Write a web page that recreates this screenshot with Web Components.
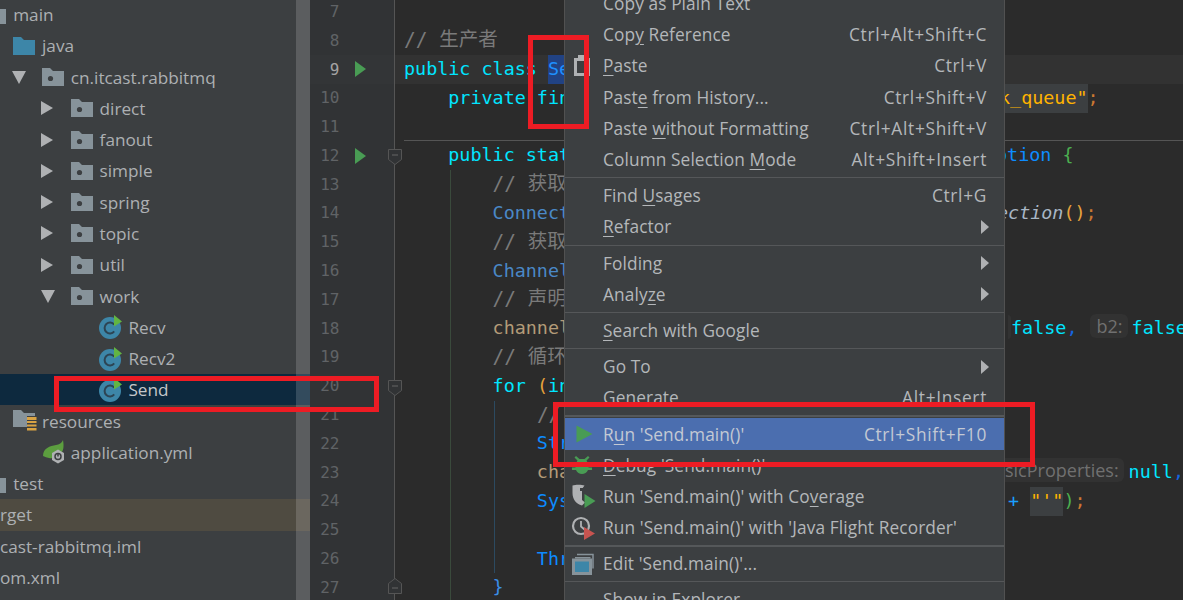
<!DOCTYPE html>
<html>
<head>
<meta charset="utf-8">
<title>IDE</title>
<style>
  html, body { margin: 0; height: 100%; background: #2b2b2b; overflow: hidden; }
  ide-app { font-family: "Open Sans", "Liberation Sans", sans-serif; }
</style>
</head>
<body>
<ide-app>
  <project-tree slot="tree">
    <tree-row level="-1" icon="plain">main</tree-row>
    <tree-row level="0" icon="source">java</tree-row>
    <tree-row level="1" icon="package" arrow="down">cn.itcast.rabbitmq</tree-row>
    <tree-row level="2" icon="package" arrow="right">direct</tree-row>
    <tree-row level="2" icon="package" arrow="right">fanout</tree-row>
    <tree-row level="2" icon="package" arrow="right">simple</tree-row>
    <tree-row level="2" icon="package" arrow="right">spring</tree-row>
    <tree-row level="2" icon="package" arrow="right">topic</tree-row>
    <tree-row level="2" icon="package" arrow="right">util</tree-row>
    <tree-row level="2" icon="package" arrow="down">work</tree-row>
    <tree-row level="3" icon="class">Recv</tree-row>
    <tree-row level="3" icon="class">Recv2</tree-row>
    <tree-row level="3" icon="class" selected>Send</tree-row>
    <tree-row level="0" icon="resources">resources</tree-row>
    <tree-row level="1" icon="spring">application.yml</tree-row>
    <tree-row level="-1" icon="plain">test</tree-row>
    <tree-row flat excluded>rget</tree-row>
    <tree-row flat>cast-rabbitmq.iml</tree-row>
    <tree-row flat>om.xml</tree-row>
  </project-tree>

  <code-editor slot="editor">
    <code-line n="7"></code-line>
    <code-line n="8"><span class="c">// 生产者</span></code-line>
    <code-line n="9" run active><span class="k">public class </span><span class="sel">Se</span></code-line>
    <code-line n="10" at="595"><span class="k">    private fin</span><span slot="right" class="s hl">k_queue"</span><span slot="right" class="o">;</span></code-line>
    <code-line n="11" rule></code-line>
    <code-line n="12" run fold="down" at="592"><span class="k">    public stat</span><span slot="right" class="b">ption </span><span slot="right" class="g">{</span></code-line>
    <code-line n="13" guides="1"><span>        </span><span class="c">// 获取</span></code-line>
    <code-line n="14" guides="1" at="593"><span class="t">        Connect</span><span slot="right" class="m">ection</span><span slot="right" class="y">()</span><span slot="right" class="o">;</span></code-line>
    <code-line n="15" guides="1"><span>        </span><span class="c">// 获取</span></code-line>
    <code-line n="16" guides="1"><span class="t">        Channel</span></code-line>
    <code-line n="17" guides="1"><span>        </span><span class="c">// 声明</span></code-line>
    <code-line n="18" guides="1" at="604"><span class="v">        channel</span><span slot="right" class="stub"></span><span slot="right" class="k">false</span><span slot="right" class="p">, </span><inlay-hint slot="right">b2:</inlay-hint><span slot="right" class="k">false</span></code-line>
    <code-line n="19" guides="1"><span>        </span><span class="c">// 循环</span></code-line>
    <code-line n="20" guides="1" fold="down"><span class="k">        for </span><span class="y">(</span><span class="k">in</span></code-line>
    <code-line n="21" guides="2"><span>            </span><span class="c">//</span></code-line>
    <code-line n="22" guides="2"><span class="b">            Str</span></code-line>
    <code-line n="23" guides="2" at="600"><span class="v">            cha</span><inlay-hint slot="right" flush>sicProperties:</inlay-hint><span slot="right" class="k">null</span><span slot="right" class="p">,</span></code-line>
    <code-line n="24" guides="2" at="604"><span class="b">            Sys</span><span slot="right" class="b plus">+ </span><span slot="right" class="s hl">"'"</span><span slot="right" class="g">)</span><span slot="right" class="o">;</span></code-line>
    <code-line n="25" guides="2"></code-line>
    <code-line n="26" guides="2"><span class="b">            Thr</span></code-line>
    <code-line n="27" guides="1" fold="up"><span class="u">        }</span></code-line>
  </code-editor>

  <context-menu slot="overlay">
    <menu-item>Copy as Plain Text</menu-item>
    <menu-item keys="Ctrl+Alt+Shift+C">Cop<u>y</u> Reference</menu-item>
    <menu-item icon="paste" keys="Ctrl+V"><u>P</u>aste</menu-item>
    <menu-item keys="Ctrl+Shift+V">Past<u>e</u> from History...</menu-item>
    <menu-item keys="Ctrl+Alt+Shift+V">Paste <u>w</u>ithout Formatting</menu-item>
    <menu-item keys="Alt+Shift+Insert">Column Selection <u>M</u>ode</menu-item>
    <menu-sep></menu-sep>
    <menu-item keys="Ctrl+G">Find <u>U</u>sages</menu-item>
    <menu-item arrow><u>R</u>efactor</menu-item>
    <menu-sep></menu-sep>
    <menu-item arrow>Folding</menu-item>
    <menu-item arrow>Analy<u>z</u>e</menu-item>
    <menu-sep></menu-sep>
    <menu-item><u>S</u>earch with Google</menu-item>
    <menu-sep></menu-sep>
    <menu-item arrow>Go To</menu-item>
    <menu-item keys="Alt+Insert">Generate</menu-item>
    <menu-sep thick></menu-sep>
    <menu-item icon="run" keys="Ctrl+Shift+F10" active>R<u>u</u>n 'Send.main()'</menu-item>
    <menu-item icon="debug"><u>D</u>ebug 'Send.main()'</menu-item>
    <menu-item icon="coverage">Run 'Send.main()' with Co<u>v</u>erage</menu-item>
    <menu-item icon="flight">Run 'Send.main()' with 'Java Flight Recorder'</menu-item>
    <menu-sep thick></menu-sep>
    <menu-item icon="edit">Edit 'Send.main()'...</menu-item>
    <menu-sep></menu-sep>
    <menu-item>Show in Explorer</menu-item>
  </context-menu>

  <red-box slot="overlay" style="left:528px;top:35px;width:61px;height:94px"></red-box>
  <red-box slot="overlay" style="left:54px;top:376px;width:325px;height:36px"></red-box>
  <red-box slot="overlay" style="left:553px;top:402px;width:482px;height:65px"></red-box>
</ide-app>

<script>
const ICONS = {
  plain: `<svg width="22" height="18" viewBox="0 0 22 18"><path d="M0 0h8l3 3h11v15H0z" fill="#87939a"/></svg>`,
  source: `<svg width="22" height="18" viewBox="0 0 22 18"><path d="M0 0h8l3 3h11v15H0z" fill="#3d86a8"/></svg>`,
  package: `<svg width="22" height="18" viewBox="0 0 22 18"><path d="M0 0h8l3 3h11v15H0z" fill="#87939a"/><circle cx="8.5" cy="10.5" r="2.6" fill="#3c3f41"/></svg>`,
  class: `<svg width="24" height="26" viewBox="0 0 24 26"><circle cx="11" cy="14" r="11" fill="#3d86a8"/><path d="M15.2 10.6a5.4 5.4 0 1 0 0 6.8" fill="none" stroke="#2d4453" stroke-width="2"/><path d="M15 1l8 6.5-8 5z" fill="#62b543"/></svg>`,
  resources: `<svg width="24" height="22" viewBox="0 0 24 22"><path d="M0 0h8l3 3h11v3H14v11H0z" fill="#87939a"/><path d="M14 7h9.500v3H14zM14 11h9.500v2H14zM14 14.500h9.500v2H14zM14 18h9.500v2.500H14z" fill="#d9a343"/></svg>`,
  spring: `<svg width="25" height="24" viewBox="0 0 25 24"><path d="M1 16C1 8 8 6 14 5c3-.5 6-2 7-5 1 6 1 11-3 14-4 3-7 5-11 4-2-.5-4-1-6-2z" fill="#5c9e3f"/><path d="M16 9.500l6 3.500v7l-6 3.500-6-3.500v-7z" fill="#afb1b3"/><circle cx="16" cy="16.500" r="3" fill="none" stroke="#3c3f41" stroke-width="1.500"/><path d="M16 13.500v3" stroke="#3c3f41" stroke-width="1.500"/></svg>`,
  paste: `<svg width="18" height="22" viewBox="0 0 18 22"><path d="M1 3h4V0h7v3h5v18H1z" fill="#afb1b3"/><path d="M4 6h10v12H4z" fill="#3c3f41"/></svg>`,
  run: `<svg width="24" height="20" viewBox="0 0 24 20"><path d="M6.500 1.500l16 8.500-16 8.500z" fill="#499c54"/></svg>`,
  debug: `<svg width="22" height="22" viewBox="0 0 22 22"><path d="M5 2l3.500 3h5L17 2l1.500 1.500L15.500 6.500 17 9h4v2.500h-3.500v2H21V16h-4c-1 2.500-3.500 4-6 4s-5-1.500-6-4H1v-2.500h3.500v-2H1V9h4l1.500-2.500L3.500 3.500z" fill="#499c54"/></svg>`,
  coverage: `<svg width="24" height="24" viewBox="0 0 24 24" style="overflow:visible"><path d="M2.500 1.500c3-1 9-1 12 0L12 5v11l3 2.500-3 3C6 20 2.500 15 2.500 9z" fill="#afb1b3"/><path d="M10 4h5v3h-5z" fill="#3c3f41"/><path d="M14.500 10l11 7-11 7z" fill="#499c54"/></svg>`,
  flight: `<svg width="24" height="24" viewBox="0 0 24 24" style="overflow:visible"><circle cx="11" cy="10" r="8" fill="none" stroke="#afb1b3" stroke-width="2.200"/><path d="M11 5v5.500l3.500 3" fill="none" stroke="#afb1b3" stroke-width="1.800"/><path d="M14 11l11 6.500L14 24z" fill="#c75450"/></svg>`,
  edit: `<svg width="24" height="22" viewBox="0 0 24 22"><path d="M7 1.500h16v14" fill="none" stroke="#87939a" stroke-width="1.500"/><rect x="5" y="4" width="15.500" height="1.500" fill="#87939a"/><rect x="3.500" y="7" width="17" height="13.500" fill="#3d86a8" stroke="#87939a" stroke-width="3"/></svg>`
};

class IdeApp extends HTMLElement {
  constructor() {
    super();
    this.attachShadow({mode: "open"}).innerHTML = `
      <style>
        :host { display: flex; position: relative; width: 100%; height: 600px; overflow: hidden; }
        .tree { flex: 0 0 310px; display: block; }
        .editor { flex: 1; display: block; min-width: 0; }
      </style>
      <div class="tree"><slot name="tree"></slot></div>
      <div class="editor"><slot name="editor"></slot></div>
      <slot name="overlay"></slot>`;
  }
}

class ProjectTree extends HTMLElement {
  constructor() {
    super();
    this.attachShadow({mode: "open"}).innerHTML = `
      <style>
        :host { display: block; position: relative; height: 600px; background: #3c3f41; color: #adb0b3; overflow: hidden; }
        .rows { margin-top: -1px; }
        .scroll { position: absolute; top: 0; bottom: 0; right: 0; width: 14px; background: rgba(255,255,255,.16); }
      </style>
      <div class="rows"><slot></slot></div>
      <div class="scroll"></div>`;
  }
}

class TreeRow extends HTMLElement {
  connectedCallback() {
    const level = parseFloat(this.getAttribute("level") || 0);
    const arrow = this.getAttribute("arrow");
    const icon = this.getAttribute("icon");
    const arrows = {
      right: `<svg width="12" height="14" viewBox="0 0 12 14"><path d="M0 0l12 7-12 7z" fill="#afb1b3"/></svg>`,
      down: `<svg width="14" height="13" viewBox="0 0 14 13"><path d="M0 0h14l-7 13z" fill="#afb1b3"/></svg>`
    };
    const flat = this.hasAttribute("flat");
    this.attachShadow({mode: "open"}).innerHTML = `
      <style>
        :host { display: flex; align-items: center; height: 31.28px; font-size: 17.2px; white-space: nowrap; }
        :host([selected]) { background: #0d293e; color: #c4c7ca; }
        :host([excluded]) { background: #4f4b41; }
        .arrow { flex: 0 0 29px; margin-left: ${level * 28.8 - 16}px; display: flex; align-items: center; }
        .arrow svg { margin-left: -1px; }
        .icon { flex: 0 0 29px; display: flex; align-items: center; }
        svg { display: block; }
      </style>
      ${flat ? "" : `<span class="arrow">${arrow ? arrows[arrow] : ""}</span><span class="icon">${ICONS[icon]}</span>`}
      <slot></slot>`;
  }
}

class CodeEditor extends HTMLElement {
  constructor() {
    super();
    this.attachShadow({mode: "open"}).innerHTML = `
      <style>
        :host { display: block; margin-top: -2.600px; background: #2b2b2b; }
      </style>
      <slot></slot>`;
  }
}

class CodeLine extends HTMLElement {
  connectedCallback() {
    const fold = this.getAttribute("fold");
    const at = this.getAttribute("at");
    const guides = +this.getAttribute("guides") || 0;
    const marks = {
      down: `<svg width="14" height="16" viewBox="0 0 14 16"><path d="M.5.5h13v10L7 15.500.5 10.500z" fill="#313335" stroke="#555"/><path d="M4 6h6" stroke="#666"/></svg>`,
      up: `<svg width="14" height="16" viewBox="0 0 14 16"><path d="M.5 15.500h13v-10L7 .5.5 5.500z" fill="#313335" stroke="#555"/><path d="M4 10h6" stroke="#666"/></svg>`
    };
    this.attachShadow({mode: "open"}).innerHTML = `
      <style>
        :host { display: flex; height: 28.8px; line-height: 28.8px; font-family: "DejaVu Sans Mono", "Liberation Mono", "Noto Sans CJK SC", monospace; font-size: 18.4px; white-space: pre; }
        .gutter { flex: 0 0 84px; display: flex; align-items: center; background: #313335; border-right: 1px solid #555; position: relative; }
        :host([active]) .gutter { background: #333537; }
        .num { flex: 0 0 29.500px; text-align: right; color: #606366; font-size: 16px; padding-top: 1px; }
        :host([active]) .num { color: #a4a3a3; }
        .run { flex: 0 0 11px; margin-left: 15.500px; display: flex; }
        .fold { position: absolute; left: 78px; display: flex; z-index: 1; }
        .fold.down { top: 8px; }
        .fold.up { top: 5px; }
        .code { flex: 1; display: flex; padding-left: 9px; min-width: 0; overflow: hidden; position: relative; }
        :host([active]) .code { background: #323232; }
        :host([rule]) .code::after { content: ""; position: absolute; left: 9px; right: 0; bottom: 0; height: 1px; background: #555; }
        .guide { position: absolute; top: 0; bottom: 0; width: 1px; }
        .g1 { left: 55px; background: #3a4a3c; }
        .g2 { left: 99px; background: #2c4a60; }
        .left { ${at ? `flex: 0 0 ${at}px;` : ""} }
        ::slotted(.k) { color: #00e5ff; }
        ::slotted(.c) { color: #7a7a7a; font-size: 19.500px; }
        ::slotted(.sel) { color: #1e90ff; background: #214283; display: inline-block; }
        ::slotted(.hl) { background: #3c3f41; display: inline-block; }
        ::slotted(.t) { color: #4a88c7; }
        ::slotted(.b) { color: #0d8bff; }
        ::slotted(.plus) { color: #1a9fff; }
        ::slotted(.v) { color: #b39b78; }
        ::slotted(.s) { color: #ffb300; }
        ::slotted(.o) { color: #cc7832; }
        ::slotted(.g) { color: #4caf50; }
        ::slotted(.y) { color: #e6a23c; }
        ::slotted(.p) { color: #1565e0; }
        ::slotted(.u) { color: #3a8ee6; }
        ::slotted(.m) { color: #a9b7c6; font-style: italic; }
        ::slotted(.stub) { display: inline-block; width: 3px; height: 24px; background: #323232; border-radius: 0 5px 5px 0; vertical-align: -5px; }
      </style>
      <div class="gutter">
        <span class="num">${this.getAttribute("n")}</span>
        ${this.hasAttribute("run") ? `<span class="run"><svg width="11" height="16" viewBox="0 0 11 16"><path d="M0 0l11 8-11 8z" fill="#499c54"/></svg></span>` : ""}
        ${fold ? `<span class="fold ${fold}">${marks[fold]}</span>` : ""}
      </div>
      <div class="code">
        ${guides ? `<i class="guide g1"></i>` : ""}
        ${guides === 2 ? `<i class="guide g2"></i>` : ""}
        <span class="left"><slot></slot></span>
        <span class="right"><slot name="right"></slot></span>
      </div>`;
  }
}

class InlayHint extends HTMLElement {
  constructor() {
    super();
    this.attachShadow({mode: "open"}).innerHTML = `
      <style>
        :host { display: inline-block; white-space: nowrap; height: 24px; line-height: 24px; padding: 0 5px 0 7px; margin: 0 4px 0 1px; border-radius: 6px; background: #323232; color: #707070; font-family: "Open Sans", "Liberation Sans", sans-serif; font-size: 18px; vertical-align: 1px; }
        :host([flush]) { padding-left: 1px; margin: 0 5px 0 0; border-radius: 0 6px 6px 0; }
      </style>
      <slot></slot>`;
  }
}

class ContextMenu extends HTMLElement {
  constructor() {
    super();
    this.attachShadow({mode: "open"}).innerHTML = `
      <style>
        :host { display: block; position: absolute; left: 564px; top: -12px; width: 439px; background: #3c3f41; color: #b4b7ba; border: solid #515151; border-width: 0 1px; }
      </style>
      <slot></slot>`;
  }
}

class MenuItem extends HTMLElement {
  connectedCallback() {
    const icon = this.getAttribute("icon");
    const keys = this.getAttribute("keys");
    this.attachShadow({mode: "open"}).innerHTML = `
      <style>
        :host { display: flex; align-items: center; height: 31.2px; font-size: 17.3px; white-space: nowrap; padding-right: 17px; }
        :host([active]) { background: #4b6eaf; color: #c3c9d4; }
        .icon { flex: 0 0 38px; display: flex; justify-content: center; padding-right: 5px; box-sizing: border-box; }
        .label { flex: 1; letter-spacing: .1px; }
        .keys { letter-spacing: .7px; }
        ::slotted(u) { text-underline-offset: 3px; }
        .arrow { width: 0; height: 0; border-left: 8px solid #afb1b3; border-top: 7px solid transparent; border-bottom: 7px solid transparent; margin-right: -2px; }
      </style>
      <span class="icon">${icon ? ICONS[icon] : ""}</span>
      <span class="label"><slot></slot></span>
      ${keys ? `<span class="keys">${keys}</span>` : ""}
      ${this.hasAttribute("arrow") ? `<span class="arrow"></span>` : ""}`;
  }
}

class MenuSep extends HTMLElement {
  constructor() {
    super();
    this.attachShadow({mode: "open"}).innerHTML = `
      <style>
        :host { display: block; height: 1px; margin: 2px 0; background: #555759; }
        :host([thick]) { height: 2px; margin: 2px 0 1px; background: #55585a; }
      </style>`;
  }
}

class RedBox extends HTMLElement {
  constructor() {
    super();
    this.attachShadow({mode: "open"}).innerHTML = `
      <style>
        :host { display: block; position: absolute; box-sizing: border-box; border: 5px solid #ed1c24; pointer-events: none; z-index: 5; }
      </style>`;
  }
}

customElements.define("ide-app", IdeApp);
customElements.define("project-tree", ProjectTree);
customElements.define("tree-row", TreeRow);
customElements.define("code-editor", CodeEditor);
customElements.define("code-line", CodeLine);
customElements.define("inlay-hint", InlayHint);
customElements.define("context-menu", ContextMenu);
customElements.define("menu-item", MenuItem);
customElements.define("menu-sep", MenuSep);
customElements.define("red-box", RedBox);
</script>
</body>
</html>
